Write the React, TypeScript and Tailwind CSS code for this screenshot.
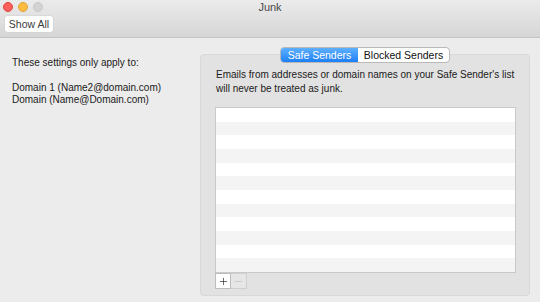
import { Plus, Minus } from "lucide-react";

const rows = Array.from({ length: 12 }, (_, i) => i);

export default function App() {
  return (
    <div className="flex h-[302px] w-[540px] flex-col overflow-hidden bg-[#ececec] font-['Liberation_Sans',Arial,sans-serif] text-[10px] text-[#1a1a1a]">
      {/* title bar + toolbar */}
      <div className="relative h-[38px] shrink-0 border-b border-[#c4c4c4] bg-gradient-to-b from-[#ebebeb] to-[#d6d6d6]">
        <div className="flex items-center gap-[5px] pl-[3px] pt-[2px]">
          <span className="h-[10px] w-[10px] rounded-full border border-[#e0443e] bg-[#fc605c]" />
          <span className="h-[10px] w-[10px] rounded-full border border-[#dea236] bg-[#fdbc40]" />
          <span className="h-[10px] w-[10px] rounded-full border border-[#c8c8c8] bg-[#d3d3d3]" />
        </div>
        <div className="absolute left-0 right-0 top-0 text-center text-[11px] leading-[15px] text-[#4a4a4a]">
          Junk
        </div>
        <button className="ml-[5px] mt-[4px] h-[16px] w-[48px] rounded-[3px] bg-white text-[10.5px] leading-[16px] text-[#3a3a3a] shadow-[0_0_0_0.5px_#d0d0d0]">
          Show All
        </button>
      </div>

      <div className="flex flex-1">
        <div className="w-[200px] shrink-0 whitespace-nowrap pl-[12px] pt-[19px] leading-[12px]">
          <p>These settings only apply to:</p>
          <p className="mt-[13px]">Domain 1 (Name2@domain.com)</p>
          <p>Domain (Name@Domain.com)</p>
        </div>

        <div className="mt-[16px] h-[242px] w-[330px] rounded-[4px] border border-[#d8d8d8] bg-[#e2e2e2]">
          <div className="-mt-[8px] flex justify-center">
            <div className="flex h-[16px] overflow-hidden rounded-[4px] border border-[#b8b8b8] bg-white text-[10.5px] leading-[14px]">
              <span className="w-[77px] bg-gradient-to-b from-[#5eb0fd] to-[#1b7ff5] text-center text-white">
                Safe Senders
              </span>
              <span className="w-[91px] text-center text-[#111]">Blocked Senders</span>
            </div>
          </div>
          <p className="ml-[15px] mt-[5px] whitespace-nowrap leading-[14px]">
            Emails from addresses or domain names on your Safe Sender's list
            <br />
            will never be treated as junk.
          </p>
          <div className="ml-[14px] mt-[11px] flex h-[166px] w-[301px] flex-col border border-[#c9c9c9] bg-white">
            {rows.map((i) => (
              <div key={i} className={i % 2 === 0 ? "flex-1 bg-white" : "flex-1 bg-[#f4f4f4]"} />
            ))}
          </div>
          <div className="ml-[14px] flex">
            <div className="flex h-[16px] w-[16px] items-center justify-center border border-[#bdbdbd] bg-white">
              <Plus size={11} strokeWidth={1.5} className="text-[#2a2a2a]" />
            </div>
            <div className="flex h-[16px] w-[16px] items-center justify-center border border-l-0 border-[#cfcfcf] bg-[#e6e6e6]">
              <Minus size={11} strokeWidth={1.5} className="text-[#bdbdbd]" />
            </div>
          </div>
        </div>
      </div>
    </div>
  );
}
